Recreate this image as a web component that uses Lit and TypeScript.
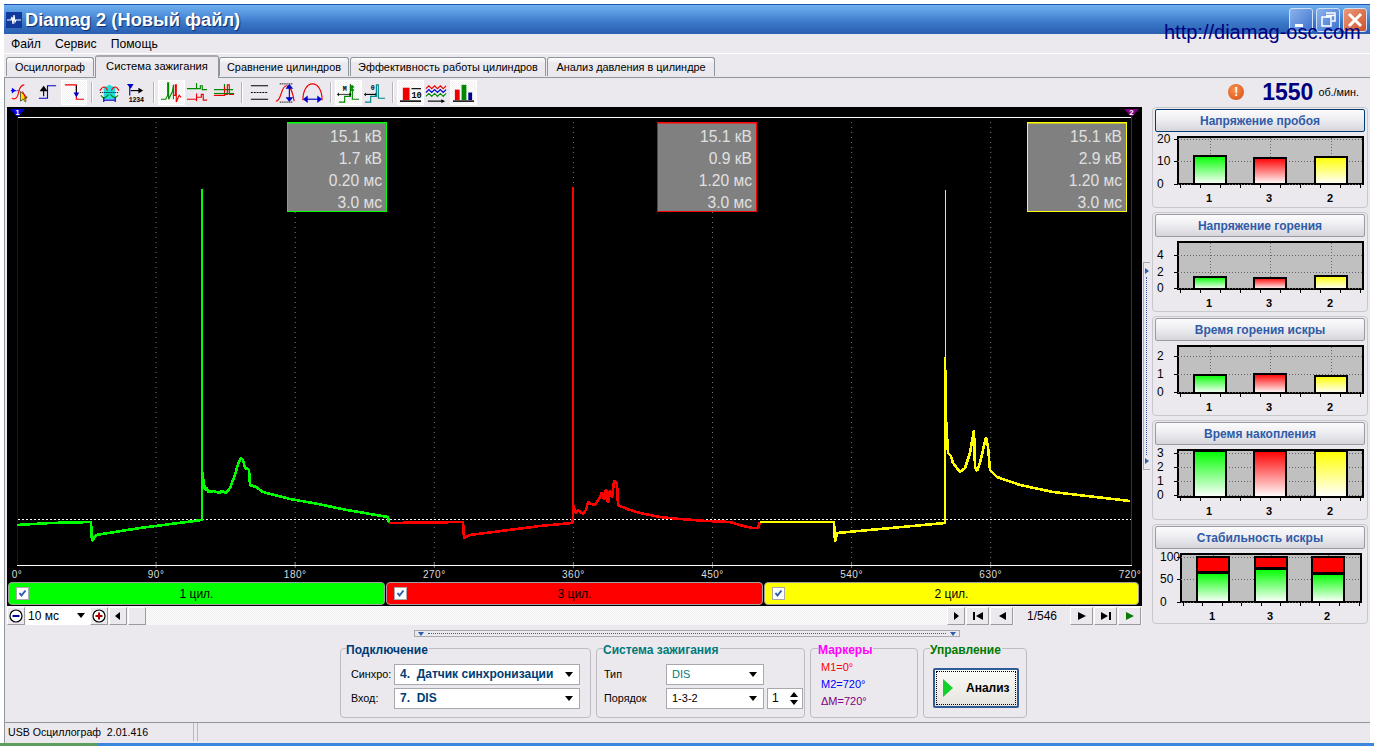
import { LitElement, html, svg, css } from "lit";
import { customElement, property } from "lit/decorators.js";

type Pt = [number, number];

const GREEN: Pt[] = [[17,525],[50,523],[91,522],[92,541],[96,535],[140,528],[202,520],[202,189],[202,471],[205,490],[207,488],[208,492],[214,491],[219,493],[222,491],[226,493],[230,488],[235,475],[238,464],[241,458],[243,460],[245,468],[248,469],[249,470],[250,485],[256,487],[263,492],[290,499],[313,503],[347,510],[388,517],[389,523]];
const RED: Pt[] = [[389,523],[463,522],[464,538],[470,535],[540,526],[572,523],[573,518],[573,187],[573,505],[576,513],[578,510],[583,514],[586,510],[588,502],[591,504],[595,505],[600,497],[602,492],[604,500],[606,489],[608,503],[610,490],[612,498],[614,481],[617,483],[618,505],[627,509],[640,513],[660,517],[680,519],[707,521],[730,522],[743,526],[753,528],[758,528],[760,522]];
const YELLOW: Pt[] = [[760,522],[820,522],[834,522],[835,542],[837,533],[880,529],[945,523],[945,357],[946,418],[948,453],[951,456],[953,463],[960,472],[965,468],[970,453],[974,430],[975,467],[977,471],[980,463],[983,450],[986,437],[988,447],[990,470],[997,477],[1020,485],[1053,492],[1087,496],[1130,501]];
const DEG = ["0°","90°","180°","270°","360°","450°","540°","630°","720°"];
const TABS: [string, number][] = [
  ["Осциллограф", 88],
  ["Система зажигания", 124],
  ["Сравнение цилиндров", 130],
  ["Эффективность работы цилиндров", 196],
  ["Анализ давления в цилиндре", 168],
];

const pts = (p: Pt[]) => p.map((a) => a.join(",")).join(" ");

// toolbar glyphs, drawn on a 24px grid
const ICONS = [
  svg`<path d="M2 10h10" stroke="#00f" stroke-dasharray="1 1"/><path d="M3 7v6l4-3z" fill="#00f"/><path d="M3 18c4 2 6-1 7-6s3-8 6-8" stroke="#e00" fill="none"/><path d="M12 11v10l3-2 2 3 1-1-2-3 3-1z" fill="#fd0" stroke="#000" stroke-width=".6"/><path d="M14 11c2 3 3 6 4 8" stroke="#e00" fill="none"/>`,
  svg`<path d="M3 18h9V5h9" stroke="#00c" fill="none"/><path d="M8 16V9M5 10l3-4 3 4z" stroke="#000" fill="#000"/>`,
  svg`<path d="M3 4h12v15h8" stroke="#e00" fill="none"/><path d="M15 5v8" stroke="#000"/><path d="M12 12h6l-3 5z" fill="#00c"/>`,
  svg`<path d="M6 7l6-3 6 3v12H6z" fill="#2dd"/><path d="M2 10c3-5 6-5 8 0M14 10c2-5 5-5 8 0" stroke="#e00" fill="none"/><path d="M2 12h20" stroke="#000" stroke-dasharray="1 1"/><path d="M3 15c3 4 5 3 8-1M13 14c3 4 5 4 8 1" stroke="#080" fill="none"/><path d="M6 17v5M18 17v5M6 20h12" stroke="#00c"/>`,
  svg`<path d="M6 6v9" stroke="#00c"/><path d="M3 3h7l-3 5z" fill="#00c"/><path d="M7 10h11" stroke="#000"/><path d="M15 7l5 3-5 3z"/><text x="5" y="22" font-size="7" font-family="Liberation Mono" font-weight="700" textLength="16">1234</text>`,
  svg`<path d="M1 19h5l2-4 0-13h1v17l4-8 1-7v15" stroke="#080" fill="none"/><path d="M14 15h2V4h1v18l3-7 2 2" stroke="#e00" fill="none"/>`,
  svg`<path d="M1 8h10V2M11 8h4V5h2v4h5" stroke="#080" fill="none"/><path d="M1 19h10v-6v8M11 17h5v-3h2v6h4" stroke="#e00" fill="none"/>`,
  svg`<path d="M1 9h11V3M12 9h9" stroke="#080" fill="none"/><path d="M1 15h11V6M12 14h3V4h2v10h5" stroke="#e00" fill="none"/><path d="M1 13h21" stroke="#080"/>`,
  svg`<path d="M3 5h18M3 19h18" stroke="#000"/><path d="M3 12h18" stroke="#000" stroke-dasharray="2 1"/>`,
  svg`<path d="M1 21c6 0 5-16 11-16 4 0 6 5 8 16" stroke="#e00" fill="none"/><path d="M5 3h13M5 22h13" stroke="#000" stroke-dasharray="1 1"/><path d="M15 7v12" stroke="#00c"/><path d="M11 8l4-5 4 5zM11 17l4 5 4-5z" fill="#00c"/>`,
  svg`<path d="M2 20C2 10 6 3 12 3s10 7 10 17" stroke="#e00" fill="none"/><path d="M4 19h16" stroke="#00c"/><path d="M7 15l-5 4 5 4zM17 15l5 4-5 4z" fill="#00c"/>`,
  svg`<text x="6" y="10" font-size="7" font-family="Liberation Mono" font-weight="700" textLength="12">MC</text><path d="M1 14h13M14 14V3" stroke="#000" stroke-width=".8"/><path d="M2 22h6v-6h6V5h2v14h7" stroke="#080" fill="none"/><path d="M2 12l-2 2 2 2zM13 12l2 2-2 2z"/>`,
  svg`<text x="8" y="9" font-size="7" font-family="Liberation Mono" font-weight="700">0</text><path d="M3 14h11" stroke="#000"/><path d="M3 12l-2 2 2 2zM13 12l2 2-2 2z"/><path d="M2 22h6v-6h6V4h2v14h7" stroke="#088" fill="none"/>`,
  svg`<path d="M4 7h7v13H4z" fill="#e00"/><path d="M1 21h22" stroke="#000" stroke-width="1.6"/><path d="M13 8h10" stroke="#000"/><text x="13" y="18" font-size="9" font-family="Liberation Mono" font-weight="700">10</text>`,
  svg`<path d="M1 8l3-3 3 3 3-3 3 3 3-3 3 3 3-3" stroke="#e00" fill="none"/><path d="M1 12l3-3 3 3 3-3 3 3 3-3 3 3 3-3" stroke="#00c" fill="none"/><path d="M1 16l3-3 3 3 3-3 3 3 3-3 3 3 3-3" stroke="#080" fill="none"/><path d="M3 21h16" stroke="#000"/><path d="M17 19l4 2-4 2z"/>`,
  svg`<path d="M3 9h5v11H3z" fill="#e00"/><path d="M10 4h5v16h-5z" fill="#080"/><path d="M17 12h4v8h-4z" fill="#008"/><path d="M1 21h22" stroke="#000" stroke-width="1.5"/>`,
];

@customElement("bar-chart")
export class BarChart extends LitElement {
  @property() title = "";
  @property({ type: Array }) ticks: [string, number][] = [];
  @property({ type: Array }) bars: number[] = [];
  @property({ type: Array }) split: number[] = [];
  @property({ type: Array }) xs: number[] = [16, 76, 137];
  @property({ type: Number }) plotH = 47;
  @property({ type: Number }) plotX = 0;
  @property({ type: Number }) plotW = 185;
  @property({ type: Number }) labelX = -21;
  @property({ type: Boolean, reflect: true }) focused = false;

  static styles = css`
    :host {
      display: block;
      box-sizing: border-box;
      height: 100px;
      padding: 1px 2px 0;
      border: 1px solid #c8c8cc;
      border-radius: 4px;
    }
    :host([focused]) {
      height: 101px;
    }
    button {
      display: block;
      width: 100%;
      height: 23px;
      padding: 0;
      border: 1px solid #9a9aa2;
      border-radius: 2px;
      background: linear-gradient(#fbfbfc, #f0f0f3 40%, #d6d5dc);
      color: #2f5ba8;
      font: bold 12px "Liberation Sans", sans-serif;
    }
    :host([focused]) button {
      border-color: #003c74;
    }
    svg {
      display: block;
      margin-top: 4px;
      overflow: visible;
    }
    text {
      font-family: "Liberation Sans", sans-serif;
      font-size: 12px;
    }
    .cat {
      font-size: 11px;
      font-weight: 700;
      text-anchor: middle;
    }
  `;

  render() {
    const h = this.plotH;
    const base = 2 + h;
    const x0 = this.plotX;
    const x1 = x0 + this.plotW;
    return html`
      <button>${this.title}</button>
      <svg width="210" height="70" viewBox="-23 0 210 70" shape-rendering="crispEdges">
        <rect x=${x0} y="1" width=${this.plotW} height=${h} fill="#c0c0c0" stroke="#000" stroke-width="2" />
        ${this.ticks.map(([label, y]) => svg`
          <path d="M${x0} ${y}H${x1}" stroke="#666" stroke-dasharray="1 2" />
          <path d="M${x0 - 4} ${y}H${x0}" stroke="#000" />
          <text x=${this.labelX} y=${y + 4} shape-rendering="auto">${label}</text>`)}
        ${this.xs.map((x) => svg`
          <path d="M${x + 16} 2V${base}" stroke="#666" stroke-dasharray="1 2" />`)}
        ${this.xs.map((x, i) => {
          const top = this.bars[i];
          const split = this.split[i];
          return svg`
            <rect x=${x} y=${top} width="32" height=${base - 1 - top} fill=${`url(#g${i})`} stroke="#000" stroke-width="1.4" />
            ${split
              ? svg`<rect x=${x} y="4" width="32" height=${split - 4} fill="#f00" stroke="#000" stroke-width="1.4" />`
              : ""}`;
        })}
        ${[0, 1, 2, 3, 4, 5, 6, 7, 8, 9].map((i) => svg`
          <path d="M${x0 + 2 + (i * this.plotW) / 9.2} ${base}v3" stroke="#000" />`)}
        <defs>
          ${(this.split.length ? ["#0f0", "#0f0", "#0f0"] : ["#0f0", "#f00", "#ff0"]).map((c, i) => svg`
            <linearGradient id=${`g${i}`} x1="0" y1="0" x2="0" y2="1">
              <stop offset="0" stop-color=${c} /><stop offset="1" stop-color="#fff" />
            </linearGradient>`)}
        </defs>
        <text class="cat" x=${this.xs[0] + 15} y=${base + 17} shape-rendering="auto">1</text>
        <text class="cat" x=${this.xs[1] + 15} y=${base + 17} shape-rendering="auto">3</text>
        <text class="cat" x=${this.xs[2] + 15} y=${base + 17} shape-rendering="auto">2</text>
      </svg>
    `;
  }
}

@customElement("app-root")
export class AppRoot extends LitElement {
  static styles = css`
    :host {
      display: block;
      width: 1374px;
      height: 746px;
      overflow: hidden;
      background: #fff;
      font: 12px "Liberation Sans", sans-serif;
      color: #000;
      position: relative;
    }
    .window {
      box-sizing: border-box;
      height: 739px;
      margin: 4px 4px 0;
      background: #ebe9ee;
      display: flex;
      flex-direction: column;
    }
    .title {
      flex: none;
      height: 30px;
      display: flex;
      align-items: center;
      padding-left: 2px;
      gap: 3px;
      border-top: 1px solid #1c54b0;
      box-sizing: border-box;
      background: linear-gradient(#6fb0ee, #5a9ae2 25%, #3c78c8 60%, #2a5fb0);
    }
    .logo {
      width: 16px;
      height: 16px;
      flex: none;
    }
    .caption {
      flex: 1;
      color: #fff;
      font: bold 18.3px "Liberation Sans", sans-serif;
      text-shadow: 1px 1px 1px #0a2a70;
      white-space: nowrap;
    }
    .caps {
      display: flex;
      gap: 3px;
      padding-right: 3px;
    }
    .cap {
      width: 24px;
      height: 24px;
      box-sizing: border-box;
      border: 1px solid #cfe0f8;
      border-radius: 3px;
      background: linear-gradient(135deg, #8cb4ea, #3c70d0);
      display: block;
    }
    .cap.close {
      background: linear-gradient(135deg, #eb9a7c, #d0502a);
    }
    .url {
      position: absolute;
      left: 1164px;
      top: 21px;
      color: #000080;
      font-size: 20px;
      line-height: 22px;
      white-space: nowrap;
    }
    .menu {
      flex: none;
      height: 19px;
      display: flex;
      gap: 14px;
      align-items: center;
      padding-left: 7px;
      border-bottom: 1px solid #fff;
      font-size: 12.2px;
    }
    .tabs {
      flex: none;
      height: 23px;
      display: flex;
      align-items: flex-end;
      padding-left: 2px;
      gap: 1px;
    }
    .tab {
      box-sizing: border-box;
      height: 19px;
      margin-bottom: 1px;
      border: 1px solid #8f969c;
      border-bottom: 0;
      border-radius: 3px 3px 0 0;
      background: linear-gradient(#fff, #ebe9ee 30%);
      line-height: 18px;
      font-size: 10.9px;
      text-align: center;
      white-space: nowrap;
    }
    .tab.on {
      height: 23px;
      margin: 0 -1px 0 0;
      background: #ebe9ee;
      border-top: 2px solid #a8a8ae;
      position: relative;
      top: 1px;
      line-height: 19px;
      font-size: 11.2px;
    }
    .body {
      flex: 1;
      min-height: 0;
      display: flex;
      flex-direction: column;
      border-top: 1px solid #8f969c;
      border-left: 1px solid #8f969c;
    }
    .toolbar {
      flex: none;
      box-sizing: border-box;
      height: 29px;
      padding: 0 0 1px 2.5px;
      display: flex;
      align-items: center;
    }
    .tool {
      box-sizing: border-box;
      flex: none;
      width: 26.5px;
      height: 25px;
      display: flex;
      align-items: center;
      justify-content: center;
    }
    .tool svg {
      width: 23px;
      height: 23px;
    }
    .tool.on {
      background: repeating-conic-gradient(#f1f1f1 0 25%, #fff 0 50%) 0 0 / 2px 2px;
      border: 1px solid #fff;
    }
    .sep {
      flex: none;
      width: 2px;
      height: 21px;
      margin: 0 3.5px;
      background: #b4b4b8;
      border-right: 1px solid #fff;
      box-sizing: border-box;
    }
    .rpm {
      margin-left: auto;
      display: flex;
      align-items: center;
      padding-right: 11px;
    }
    .alert {
      width: 16px;
      height: 16px;
      margin-right: 18px;
      border-radius: 50%;
      background: radial-gradient(circle at 40% 35%, #f59050, #d84a10);
      color: #fff;
      font: bold 12px/16px "Liberation Sans", sans-serif;
      text-align: center;
    }
    .num {
      color: #000080;
      font: bold 23px "Liberation Sans", sans-serif;
      margin-right: 5px;
    }
    .unit {
      font-size: 10.8px;
    }
    .work {
      flex: none;
      display: flex;
    }
    .left {
      width: 1135px;
      margin-left: 2px;
      flex: none;
    }
    .scope {
      background: #000;
      padding-bottom: 1px;
    }
    .scope svg.plot {
      display: block;
    }
    .plot text {
      font-family: "Liberation Sans", sans-serif;
    }
    .deg {
      fill: #ddd;
      font-size: 10px;
      letter-spacing: 0.5px;
      text-anchor: middle;
    }
    .val {
      fill: #e0e0e0;
      font-size: 15.6px;
      text-anchor: end;
    }
    .flag {
      fill: #fff;
      font-size: 8px;
      font-weight: 700;
      text-anchor: middle;
    }
    .legend {
      box-sizing: border-box;
      display: grid;
      grid-template-columns: 377px 377px 375px;
      gap: 1px;
      padding: 1px 1px 0;
      height: 24px;
    }
    .cyl {
      position: relative;
      display: flex;
      align-items: center;
      justify-content: center;
      border: 1px solid #a0a0a0;
      border-radius: 4px;
      font-size: 12px;
    }
    .check {
      position: absolute;
      left: 7px;
      top: 4px;
      width: 13px;
      height: 13px;
      box-sizing: border-box;
      background: #fff;
      border: 1px solid #aaa;
    }
    .bar {
      height: 19px;
      display: flex;
      align-items: center;
      background: repeating-conic-gradient(#ececec 0 25%, #fff 0 50%) 0 0 / 2px 2px;
    }
    .btn {
      box-sizing: border-box;
      flex: none;
      height: 18px;
      width: 18px;
      display: flex;
      align-items: center;
      justify-content: center;
      background: #ebe9ee;
      border: 1px solid;
      border-color: #fff #9a9a9f #9a9a9f #fff;
      margin-right: 1px;
    }
    .btn.wide {
      width: 23px;
    }
    .drop {
      box-sizing: border-box;
      width: 64px;
      height: 18px;
      background: #fff;
      display: flex;
      align-items: center;
      padding: 0 5px 0 2px;
      justify-content: space-between;
    }
    .arrow {
      flex: none;
      width: 0;
      height: 0;
      border: 4px solid transparent;
      border-top: 5px solid #000;
      border-bottom: 0;
    }
    .track {
      flex: 1;
    }
    .page {
      width: 56px;
      text-align: center;
      background: #ebe9ee;
      line-height: 18px;
    }
    .vsplit {
      box-sizing: border-box;
      width: 7px;
      height: 208px;
      margin: 155px 2px 0 1px;
      padding: 5px 0 5px 1px;
      border: 1px solid #a8a8ae;
      border-right: 0;
      display: flex;
      flex-direction: column;
      gap: 3px;
    }
    .vsplit i {
      flex: 1;
      margin-left: 1px;
      border-left: 1px dotted #2a5fb0;
    }
    .tri-r {
      flex: none;
      width: 0;
      height: 0;
      border: 3px solid transparent;
      border-left: 4px solid #2a5fb0;
      border-right: 0;
    }
    .side {
      flex: none;
      width: 216px;
      display: flex;
      flex-direction: column;
      gap: 4px;
    }
    .hsplit {
      box-sizing: border-box;
      width: 546px;
      height: 7px;
      margin: 5px 0 0 409px;
      border: 1px solid #a8a8ae;
      display: flex;
      align-items: center;
      padding: 0 3px;
      gap: 4px;
    }
    .hsplit i {
      flex: 1;
      border-top: 1px dotted #2a5fb0;
    }
    .tri {
      width: 0;
      height: 0;
      border: 3px solid transparent;
      border-top: 4px solid #2a5fb0;
      border-bottom: 0;
    }
    .controls {
      flex: none;
      display: flex;
      gap: 5px;
      padding: 11px 0 0 335px;
    }
    .group {
      box-sizing: border-box;
      height: 70px;
      border: 1px solid #bcbcc2;
      border-radius: 4px;
      position: relative;
    }
    .g1 { width: 251px; }
    .g2 { width: 209px; }
    .g3 { width: 108px; }
    .g4 { width: 104px; }
    .legendtext {
      position: absolute;
      top: -6px;
      left: 5px;
      background: #ebe9ee;
      padding-right: 1px;
      font-weight: 700;
      font-size: 12px;
      line-height: 14px;
      white-space: nowrap;
    }
    .g2 .legendtext,
    .g4 .legendtext {
      left: 6px;
    }
    .g3 .legendtext {
      left: 7px;
    }
    .navy { color: #003c74; }
    .teal { color: #007a7a; }
    .pink { color: #ff00ff; }
    .dgreen { color: #007a00; }
    .row {
      display: flex;
      align-items: center;
      height: 24px;
    }
    .rows {
      padding: 13px 0 0 10px;
    }
    .rows.tight {
      padding-left: 7px;
    }
    .lbl {
      flex: none;
      width: 43px;
      font-size: 10.8px;
    }
    .tight .lbl {
      width: 62px;
    }
    .sel {
      box-sizing: border-box;
      height: 21px;
      background: #fff;
      border: 1px solid #a8a8ae;
      display: flex;
      align-items: center;
      justify-content: space-between;
      padding: 0 6px 0 5px;
      font-size: 11px;
      white-space: pre;
    }
    .sel.bold {
      width: 186px;
      color: #003c74;
      font-weight: 700;
      font-size: 12px;
    }
    .sel.small {
      width: 98px;
    }
    .spin {
      box-sizing: border-box;
      margin-left: 3px;
      width: 36px;
      height: 21px;
      background: #fff;
      border: 1px solid #a8a8ae;
      padding: 0 4px;
      display: flex;
      align-items: center;
      justify-content: space-between;
    }
    .spin b {
      display: flex;
      flex-direction: column;
      gap: 3px;
    }
    .up {
      width: 0;
      height: 0;
      border: 4px solid transparent;
      border-bottom: 5px solid #000;
      border-top: 0;
    }
    .marks {
      padding: 10px 0 0 10px;
      line-height: 17px;
      font-size: 11px;
    }
    .m1 { color: #ff0000; }
    .m2 { color: #0000ff; }
    .m3 { color: #800080; }
    .run {
      box-sizing: border-box;
      width: 86px;
      height: 40px;
      margin: 19px 0 0 9px;
      border: 2px solid #2f5b96;
      border-radius: 2px;
      background: linear-gradient(#fbfbf8, #e6e4de);
      display: flex;
      align-items: center;
      gap: 13px;
      padding-left: 8px;
      font-weight: 700;
      font-size: 12px;
      outline: 1px dotted #000;
      outline-offset: -4px;
    }
    .status {
      flex: none;
      margin-top: 4px;
      height: 19px;
      display: flex;
      border-top: 1px solid #8f969c;
      box-sizing: border-box;
      font-size: 10.6px;
    }
    .status div {
      box-sizing: border-box;
      border-right: 1px solid #b8b8bc;
      padding-left: 3px;
      line-height: 18px;
    }
    .status .info {
      width: 189px;
    }
    .status .rest {
      flex: 1;
      border-left: 1px solid #b8b8bc;
      margin-left: 3px;
      border-right: 0;
    }
    .task {
      height: 3px;
      background: linear-gradient(90deg, #5c9e5c 0 97px, #3a86dc 98px);
    }
  `;

  private tool(i: number, on = false) {
    return html`<span class="tool ${on ? "on" : ""}">
      <svg viewBox="0 0 24 24" stroke-width="1.2">${ICONS[i]}</svg>
    </span>`;
  }

  private infoBox(x: number, color: string, lines: string[]) {
    return svg`
      <rect x=${x + 0.5} y="122.5" width="99" height="89" fill="#808080" stroke=${color} />
      <path d="M${x} 123H${x + 100}" stroke=${color} />
      ${lines.map((t, i) => svg`<text class="val" x=${x + 95} y=${142 + i * 22}>${t}</text>`)}
    `;
  }

  private scope() {
    const xs = DEG.map((_, i) => 17 + i * 139.1);
    return html`
      <svg class="plot" width="1135" height="474" viewBox="7 107 1135 474">
        <path d="M17 117.5H1132" stroke="#fff" />
        ${xs.slice(1, 8).map((x) => svg`
          <path d="M${x} 122V565" stroke="#777" stroke-dasharray="1 4" />
          <path d="M${x} 562V568" stroke="#777" />`)}
        <path d="M17.5 117V565" stroke="#0000c0" />
        <path d="M1131.5 117V565" stroke="#800080" />
        <path d="M17 565.5H1132" stroke="#fff" />
        <path d="M10 109h15l-7.5 8z" fill="#0000e0" />
        <text class="flag" x="17.5" y="115">1</text>
        <path d="M1124 109h15l-7.5 8z" fill="#800080" />
        <text class="flag" x="1131.5" y="115">2</text>
        <path d="M18 519.5H1131" stroke="#fff" stroke-dasharray="2 2" shape-rendering="crispEdges" />
        <g fill="none" stroke-width="2.6" shape-rendering="crispEdges" stroke-linejoin="bevel">
          <polyline points=${pts(GREEN)} stroke="#00ff00" />
          <polyline points=${pts(RED)} stroke="#ff0000" />
          <polyline points=${pts(YELLOW)} stroke="#ffff00" />
        </g>
        <path d="M945.5 357V190" stroke="#ddd" />
        ${this.infoBox(287, "#00ff00", ["15.1 кВ", "1.7 кВ", "0.20 мс", "3.0 мс"])}
        ${this.infoBox(657, "#ff0000", ["15.1 кВ", "0.9 кВ", "1.20 мс", "3.0 мс"])}
        ${this.infoBox(1027, "#ffff00", ["15.1 кВ", "2.9 кВ", "1.20 мс", "3.0 мс"])}
        ${DEG.map((d, i) => svg`<text class="deg" x=${i === 8 ? 1130 : xs[i]} y="578">${d}</text>`)}
      </svg>
    `;
  }

  private cyl(color: string, label: string) {
    return html`<div class="cyl" style="background:${color}">
      <span class="check">
        <svg width="11" height="11" viewBox="0 0 11 11"><path d="M2.5 5l2 2.5 4-5" fill="none" stroke="#2a5fb0" stroke-width="2" /></svg>
      </span>
      ${label}
    </div>`;
  }

  private ctl(path: string, color = "#000", wide = true) {
    return html`<span class="btn ${wide ? "wide" : ""}">
      <svg width="12" height="12" viewBox="0 0 12 12"><path d=${path} fill=${color} /></svg>
    </span>`;
  }

  private zoomBtn(path: string, color: string) {
    return html`<span class="btn">
      <svg width="14" height="14" viewBox="0 0 14 14">
        <circle cx="7" cy="7" r="6" fill="#fff" stroke="#000" stroke-width="1.2" />
        <path d=${path} fill=${color} />
      </svg>
    </span>`;
  }

  render() {
    return html`
      <div class="window">
        <div class="title">
          <svg class="logo" viewBox="0 0 16 16">
            <rect width="16" height="16" fill="#123a9c" />
            <path d="M1 8h4l1-3 1 7 1-9 1 7 1-2h5" stroke="#fff" stroke-width="1.2" fill="none" />
          </svg>
          <span class="caption">Diamag 2 (Новый файл)</span>
          <div class="caps">
            <svg class="cap" viewBox="0 0 22 22"><path d="M5 15h8v3H5z" fill="#fff" /></svg>
            <svg class="cap" viewBox="0 0 22 22"><path d="M9 4h9v8h-3M5 8h9v9H5z M9 6.5h9" fill="none" stroke="#fff" stroke-width="1.5" /></svg>
            <svg class="cap close" viewBox="0 0 22 22"><path d="M5 5l12 12M17 5L5 17" stroke="#fff" stroke-width="3" /></svg>
          </div>
        </div>
        <div class="menu"><span>Файл</span><span>Сервис</span><span>Помощь</span></div>
        <div class="tabs">
          ${TABS.map(([t, w], i) => html`<span class="tab ${i === 1 ? "on" : ""}" style="width:${w}px">${t}</span>`)}
        </div>
        <div class="body">
          <div class="toolbar">
            ${this.tool(0)}${this.tool(1)}${this.tool(2, true)}<span class="sep"></span>
            ${this.tool(3)}${this.tool(4)}<span class="sep"></span>
            ${this.tool(5, true)}${this.tool(6)}${this.tool(7)}<span class="sep"></span>
            ${this.tool(8)}${this.tool(9)}${this.tool(10)}<span class="sep"></span>
            ${this.tool(11, true)}${this.tool(12)}<span class="sep"></span>
            ${this.tool(13, true)}${this.tool(14)}${this.tool(15, true)}
            <div class="rpm">
              <span class="alert">!</span>
              <span class="num">1550</span>
              <span class="unit">об./мин.</span>
            </div>
          </div>
          <div class="work">
            <div class="left">
              <div class="scope">
                ${this.scope()}
                <div class="legend">
                  ${this.cyl("#00ff00", "1 цил.")}
                  ${this.cyl("#ff0000", "3 цил.")}
                  ${this.cyl("#ffff00", "2 цил.")}
                </div>
              </div>
              <div class="bar">
                ${this.zoomBtn("M3.5 6h7v2h-7z", "#00a")}
                <span class="drop"><span>10 мс</span><span class="arrow"></span></span>
                ${this.zoomBtn("M6 3.5h2V6h2.5v2H8v2.5H6V8H3.5V6H6z", "#a00")}
                ${this.ctl("M8 2v8L3 6z", "#000", false)}
                <span class="btn"></span>
                <span class="track"></span>
                ${this.ctl("M4 2v8l5-4z", "#000", false)}
                ${this.ctl("M1 2h2v8H1zM11 2v8L4 6z")}
                ${this.ctl("M10 2v8L3 6z")}
                <span class="page">1/546</span>
                ${this.ctl("M2 2v8l8-4z")}
                ${this.ctl("M11 2H9v8h2zM1 2v8l7-4z")}
                ${this.ctl("M2 2v8l8-4z", "#087a08")}
              </div>
            </div>
            <div class="vsplit"><span class="tri-r"></span><i></i><span class="tri-r"></span></div>
            <div class="side">
              <bar-chart focused title="Напряжение пробоя"
                .ticks=${[["20", 3], ["10", 25], ["0", 48]]} .bars=${[20, 22, 21]}></bar-chart>
              <bar-chart title="Напряжение горения"
                .ticks=${[["4", 14], ["2", 31], ["0", 47]]} .bars=${[36, 37, 35]}></bar-chart>
              <bar-chart title="Время горения искры"
                .ticks=${[["2", 11], ["1", 29], ["0", 47]]} .bars=${[30, 29, 31]}></bar-chart>
              <bar-chart title="Время накопления"
                .ticks=${[["3", 4], ["2", 18], ["1", 32], ["0", 46]]} .bars=${[2, 2, 2]}></bar-chart>
              <bar-chart title="Стабильность искры" .plotH=${48} .plotX=${3} .plotW=${180} .labelX=${-18}
                .ticks=${[["100", 4], ["50", 26], ["0", 49]]} .bars=${[20, 16, 21]} .split=${[19, 15, 20]} .xs=${[19, 77, 134]}></bar-chart>
            </div>
          </div>
          <div class="hsplit"><span class="tri"></span><i></i><span class="tri"></span></div>
          <div class="controls">
            <div class="group g1">
              <span class="legendtext navy">Подключение</span>
              <div class="rows">
                <div class="row"><span class="lbl">Синхро:</span><span class="sel bold">4.  Датчик синхронизации<span class="arrow"></span></span></div>
                <div class="row"><span class="lbl">Вход:</span><span class="sel bold">7.  DIS<span class="arrow"></span></span></div>
              </div>
            </div>
            <div class="group g2">
              <span class="legendtext teal">Система зажигания</span>
              <div class="rows tight">
                <div class="row"><span class="lbl">Тип</span><span class="sel small teal">DIS<span class="arrow"></span></span></div>
                <div class="row"><span class="lbl">Порядок</span><span class="sel small">1-3-2<span class="arrow"></span></span><span class="spin">1<b><span class="up"></span><span class="arrow"></span></b></span></div>
              </div>
            </div>
            <div class="group g3">
              <span class="legendtext pink">Маркеры</span>
              <div class="marks">
                <div class="m1">M1=0°</div>
                <div class="m2">M2=720°</div>
                <div class="m3">ΔM=720°</div>
              </div>
            </div>
            <div class="group g4">
              <span class="legendtext dgreen">Управление</span>
              <div class="run">
                <svg width="10" height="18" viewBox="0 0 10 18"><path d="M0 0l10 9-10 9z" fill="#12d12a" /></svg>
                Анализ
              </div>
            </div>
          </div>
          <div class="status">
            <div class="info">USB Осциллограф&nbsp; 2.01.416</div>
            <div class="rest"></div>
          </div>
        </div>
      </div>
      <div class="task"></div>
      <div class="url">http://diamag-osc.com</div>
    `;
  }
}
